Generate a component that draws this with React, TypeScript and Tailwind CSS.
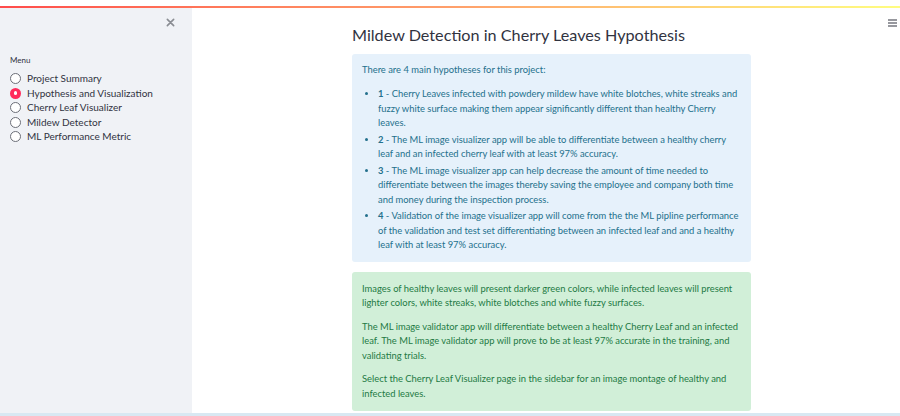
import React from 'react';

const pages = [
  'Project Summary',
  'Hypothesis and Visualization',
  'Cherry Leaf Visualizer',
  'Mildew Detector',
  'ML Performance Metric',
];

const hypotheses = [
  'Cherry Leaves infected with powdery mildew have white blotches, white streaks and fuzzy white surface making them appear significantly different than healthy Cherry leaves.',
  'The ML image visualizer app will be able to differentiate between a healthy cherry leaf and an infected cherry leaf with at least 97% accuracy.',
  'The ML image visualizer app can help decrease the amount of time needed to differentiate between the images thereby saving the employee and company both time and money during the inspection process.',
  'Validation of the image visualizer app will come from the the ML pipline performance of the validation and test set differentiating between an infected leaf and and a healthy leaf with at least 97% accuracy.',
];

export default function App() {
  return (
    <div className="w-[900px] h-[416px] flex flex-col bg-white overflow-hidden text-[#31333f] font-['Lato',sans-serif]">
      <div className="h-[6px] bg-white" />
      <div className="h-[2px] bg-gradient-to-r from-[#ff4b4b] via-[#ff9f6b] to-[#fffd80]" />
      <div className="flex flex-1 min-h-0">
        <aside className="w-[192px] bg-[#f0f2f6] flex flex-col px-[10px]">
          <div className="flex justify-end pt-[10px] pr-[7px]">
            <svg width="9" height="9" viewBox="0 0 10 10" className="text-[#8a8d93]">
              <path d="M1.5 1.5 L8.5 8.5 M8.5 1.5 L1.5 8.5" stroke="currentColor" strokeWidth="1.8" strokeLinecap="round" />
            </svg>
          </div>
          <div className="mt-[28px] text-[8px] leading-[10px]">Menu</div>
          <div className="mt-[8px] flex flex-col gap-[3.5px]">
            {pages.map((p, i) => (
              <div key={p} className="flex items-center gap-[6px] h-[11px]">
                {i === 1 ? (
                  <span className="w-[11px] h-[11px] rounded-full bg-[#ff2b5b] flex items-center justify-center">
                    <span className="w-[3.5px] h-[3.5px] rounded-full bg-white" />
                  </span>
                ) : (
                  <span className="w-[11px] h-[11px] rounded-full border border-[#6c6f78] bg-white" />
                )}
                <span className="text-[10px] leading-[11px]">{p}</span>
              </div>
            ))}
          </div>
        </aside>
        <main className="flex-1 relative">
          <div className="absolute right-[3px] top-[11px]">
            <svg width="9" height="8" viewBox="0 0 9 8">
              <path d="M0 1 H9 M0 4 H9 M0 7 H9" stroke="#31333f" strokeWidth="1.2" />
            </svg>
          </div>
          <div className="ml-[160px] w-[399px] pt-[16px]">
            <h1 className="text-[16.2px] leading-[22px] font-normal mb-[8px]">
              Mildew Detection in Cherry Leaves Hypothesis
            </h1>
            <div className="rounded-[3px] bg-[#e6f1fb] text-[#23708c] px-[10px] pt-[9px] pb-[9px] text-[9.4px] leading-[14.5px]">
              <p className="mb-[9.5px]">There are 4 main hypotheses for this project:</p>
              <ul className="list-disc pl-[16px] flex flex-col gap-[2px]">
                {hypotheses.map((h, i) => (
                  <li key={i}>
                    <b>{i + 1}</b> - {h}
                  </li>
                ))}
              </ul>
            </div>
            <div className="mt-[10px] rounded-[3px] bg-[#d1efd8] text-[#237a44] px-[10px] pt-[10px] pb-[10px] text-[9.4px] leading-[14.5px] flex flex-col gap-[9px]">
              <p>
                Images of healthy leaves will present darker green colors, while infected leaves will present lighter colors, white streaks, white blotches and white fuzzy surfaces.
              </p>
              <p>
                The ML image validator app will differentiate between a healthy Cherry Leaf and an infected leaf. The ML image validator app will prove to be at least 97% accurate in the training, and validating trials.
              </p>
              <p>
                Select the Cherry Leaf Visualizer page in the sidebar for an image montage of healthy and infected leaves.
              </p>
            </div>
          </div>
        </main>
      </div>
      <div className="h-[3px] bg-[#d8e8f2]" />
    </div>
  );
}
